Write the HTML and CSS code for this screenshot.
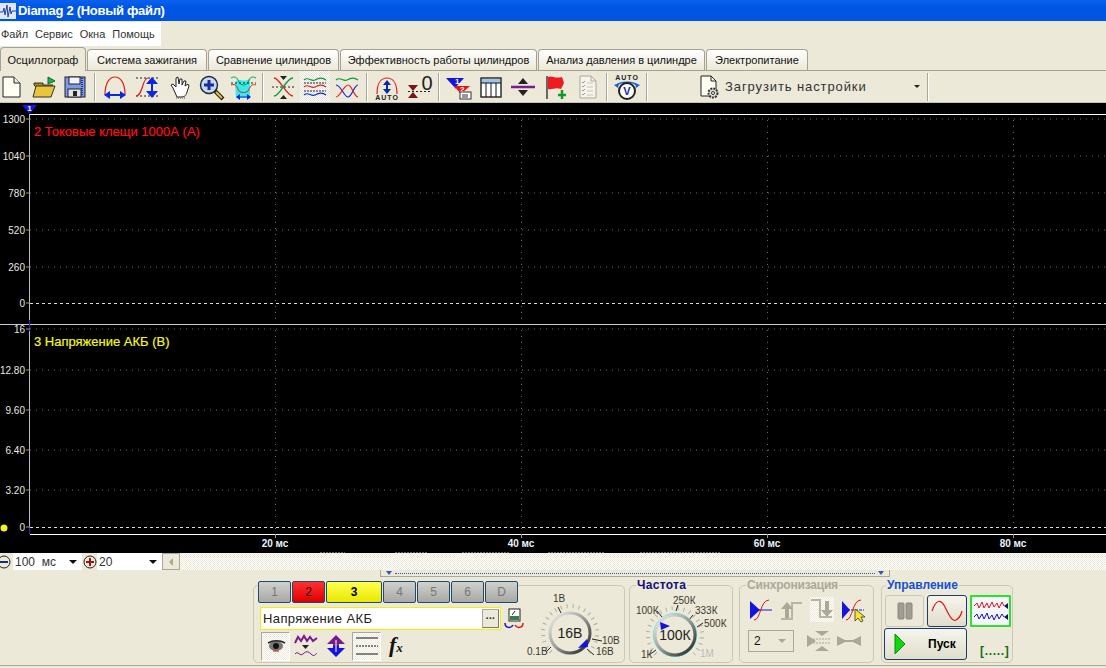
FILE: index.html
```html
<!DOCTYPE html>
<html>
<head>
    <title>Diamag 2</title>
    <link rel="stylesheet" href="styles.css">
</head>
<body>
<div class="app">
    <div class="titlebar">
        <svg class="app-icon" width="16" height="16" viewBox="0 0 16 16"><rect width="16" height="16" fill="#dfe8fb"/><path d="M0 9H3L4 5 5 12 7 2 8 14 10 4 11 11 12 8H16" fill="none" stroke="#2a3f9a" stroke-width="1"/></svg>
        <span>Diamag 2 (Новый файл)</span>
    </div>

    <div class="menubar">
        <div class="menu-items">
            <span>Файл</span><span>Сервис</span><span>Окна</span><span>Помощь</span>
        </div>
    </div>

    <div class="tabs">
        <div class="tab active">Осциллограф</div>
        <div class="tab">Система зажигания</div>
        <div class="tab">Сравнение цилиндров</div>
        <div class="tab">Эффективность работы цилиндров</div>
        <div class="tab">Анализ давления в цилиндре</div>
        <div class="tab">Электропитание</div>
    </div>

    <div class="toolbar">
        <div class="tool"><svg width="30" height="26"><path d="M7 3H18L24 9V23H7Z" fill="#fffff4" stroke="#222"/><path d="M18 3V9H24" fill="#eee" stroke="#222"/></svg></div>
        <div class="tool"><svg width="30" height="26"><path d="M6 11V9H15V11H25L22 13H8Z" fill="#a98a1c" stroke="#333"/><path d="M5 23L8 12H27L23 23Z" fill="#e8c53a" stroke="#333"/><path d="M20 10V3L27 7Z" fill="#22b14c" stroke="#0d6b2a"/></svg></div>
        <div class="tool"><svg width="30" height="26"><rect x="5" y="3" width="20" height="20" fill="#7d9be0" stroke="#223"/><rect x="9" y="3" width="11" height="7" fill="#f4f4f4" stroke="#223"/><rect x="8" y="15" width="13" height="8" fill="#e4e4e4" stroke="#223"/><rect x="13" y="17" width="4" height="5" fill="#222"/><path d="M22 4V22" stroke="#123c9c" stroke-dasharray="1 1" stroke-width="2"/></svg></div>
        <div class="sep"></div>
        <div class="tool"><svg width="30" height="26"><path d="M5 21C5 8 10 3 15 3S25 8 25 21" fill="none" stroke="#e02020" stroke-width="1.2"/><path d="M6 21H24" stroke="#0a28e0" stroke-width="2"/><path d="M4 21L10 17V25ZM26 21L20 17V25Z" fill="#0a28e0"/></svg></div>
        <div class="tool"><svg width="30" height="26"><path d="M4 4H26M4 22H26" stroke="#222" stroke-dasharray="2 2"/><path d="M4 22C11 22 10 4 16 4" fill="none" stroke="#e02020" stroke-width="1.2"/><path d="M20 7V19" stroke="#0a28e0" stroke-width="2"/><path d="M20 3L26 10H14ZM20 24L26 17H14Z" fill="#0a28e0"/></svg></div>
        <div class="tool"><svg width="30" height="26"><path d="M9 14L7 11 9 10 12 13V4L14 3 15 10 16 5H18L18 11 20 7H22L21 12 24 10 25 12 23 18C22 22 20 23 17 23H13Z" fill="#fff" stroke="#222"/><path d="M12 24H22" stroke="#555" stroke-dasharray="1 1"/></svg></div>
        <div class="tool"><svg width="30" height="26"><path d="M19 17L27 25" stroke="#222" stroke-width="4"/><path d="M20 18L26 24" stroke="#eec22a" stroke-width="2"/><circle cx="13" cy="11" r="8.5" fill="#c5d8f4" stroke="#223" stroke-width="1.4"/><path d="M8 11H18M13 6V16" stroke="#1a2a9c" stroke-width="3"/></svg></div>
        <div class="tool"><svg width="30" height="26"><path d="M7 8C12 3 14 9 22 5V24H8Z" fill="#38eaea"/><path d="M3 4C7 2 9 3 11 8 13 12 18 12 20 8 22 3 24 2 28 4" fill="none" stroke="#0a9a3a"/><path d="M3 11C8 9 9 13 11 17 13 19 18 19 20 17 22 13 24 9 28 11" fill="none" stroke="#e02020"/><path d="M3 9H28" stroke="#222" stroke-dasharray="2 2"/><path d="M10 23H21" stroke="#0a28e0"/><path d="M8 23L12 20V26ZM23 23L19 20V26Z" fill="#0a28e0"/></svg></div>
        <div class="sep"></div>
        <div class="tool"><svg width="30" height="26"><path d="M6 4C12 4 18 22 25 22" fill="none" stroke="#e02020" stroke-width="1.3"/><path d="M6 22C12 22 18 4 25 4" fill="none" stroke="#0a9a3a" stroke-width="1.3"/><path d="M4 13H27" stroke="#222" stroke-dasharray="2 2"/><path d="M12 2H19L15.500 6ZM12 25H19L15.500 21Z" fill="#222"/></svg></div>
        <div class="tool pressed"><svg width="30" height="26"><path d="M4 6C8 2 11 8 15 6S22 3 26 6" fill="none" stroke="#0a9a3a" stroke-width="1.2"/><path d="M4 13C8 9 11 15 15 13S22 10 26 13" fill="none" stroke="#e02020" stroke-width="1.2"/><path d="M4 21C8 17 11 23 15 21S22 18 26 21" fill="none" stroke="#0a28e0" stroke-width="1.2"/><path d="M4 9H26M4 17H26" stroke="#222" stroke-dasharray="2 1"/></svg></div>
        <div class="tool"><svg width="30" height="26"><path d="M4 6C8 2 11 8 15 6S22 3 26 6" fill="none" stroke="#0a9a3a" stroke-width="1.2"/><path d="M4 11C9 11 12 23 16 23S22 11 26 11" fill="none" stroke="#0a28e0" stroke-width="1.2"/><path d="M4 23C8 23 12 11 16 11S22 23 26 23" fill="none" stroke="#e02020" stroke-width="1.2"/></svg></div>
        <div class="sep"></div>
        <div class="tool"><svg width="30" height="26"><path d="M5 20C5 8 10 4 15 4S25 8 25 20" fill="none" stroke="#e02020" stroke-width="1.2"/><path d="M15 9V17" stroke="#0a28a0" stroke-width="2"/><path d="M15 6L19 11H11ZM15 20L19 15H11Z" fill="#0a28a0"/><text x="15" y="26" class="tiny" text-anchor="middle">AUTO</text></svg></div>
        <div class="tool"><svg width="30" height="26"><path d="M4 11H14L9 17ZM4 24H14L9 18Z" fill="#7a1414"/><path d="M4 17.500H28" stroke="#222" stroke-dasharray="2 2"/><text x="23" y="16" class="zero" text-anchor="middle">0</text></svg></div>
        <div class="sep"></div>
        <div class="tool"><svg width="30" height="26"><path d="M2 4H20L12 13V15Z" fill="#1414e0"/><path d="M10 12H26L18 19V23L16 24V19Z" fill="#e01414"/><text x="11" y="10" class="num">1</text><text x="16" y="18" class="num">2</text><rect x="16" y="18" width="11" height="7" fill="#fff" stroke="#333"/><path d="M19 20V24M21 20V24M23 20V24" stroke="#333"/></svg></div>
        <div class="tool"><svg width="30" height="26"><rect x="5" y="4" width="20" height="19" fill="#fff" stroke="#111" stroke-width="1.300"/><rect x="6" y="5" width="18" height="4" fill="#9fc4ea"/><path d="M5 9H25M10 9V23M15 9V23M20 9V23" stroke="#111"/></svg></div>
        <div class="tool"><svg width="30" height="26"><path d="M3 13H27" stroke="#7a1a8c" stroke-width="2.500"/><path d="M15 4L20 10H10ZM15 22L20 16H10Z" fill="#222"/></svg></div>
        <div class="tool"><svg width="30" height="26"><path d="M7 2V25" stroke="#222" stroke-width="1.300"/><path d="M8 3C12 1 14 5 22 3L24 9 21 15C15 13 13 16 8 15Z" fill="#ee1c1c"/><path d="M22 16V25M18 21H26" stroke="#109a2c" stroke-width="2.500"/></svg></div>
        <div class="tool"><svg width="30" height="26"><path d="M8 2H19L24 7V24H8Z" fill="#f6f4ea" stroke="#aaa89a"/><path d="M19 2V7H24" fill="none" stroke="#aaa89a"/><path d="M10 8L11 9 13 7M10 12L11 13 13 11M10 16L11 17 13 15M10 20L11 21 13 19" fill="none" stroke="#999"/><path d="M15 9H21M15 13H21M15 17H21M15 21H21" stroke="#c8c6b8"/></svg></div>
        <div class="sep"></div>
        <div class="tool"><svg width="30" height="26"><text x="15" y="6" class="tiny" text-anchor="middle">AUTO</text><path d="M4 12C8 7 22 7 26 12" fill="none" stroke="#1464e0" stroke-width="1.500"/><path d="M2 11L7 9 6 14ZM28 11L23 9 24 14Z" fill="#1464e0"/><circle cx="15" cy="17" r="8" fill="#fff" stroke="#222" stroke-width="2"/><text x="15" y="21" class="vee" text-anchor="middle">V</text></svg></div>
        <div class="sep"></div>

        <div class="load-btn">
            <svg width="24" height="26"><path d="M4 2H14L19 7V22H4Z" fill="#fffff4" stroke="#222"/><path d="M14 2V7H19" fill="none" stroke="#222"/><circle cx="16" cy="19" r="4.500" fill="#ddd" stroke="#333" stroke-dasharray="2 1" stroke-width="2"/><circle cx="16" cy="19" r="1.500" fill="#fff" stroke="#333"/></svg>
            <span class="load-label">Загрузить настройки</span>
            <span class="load-arrow"></span>
        </div>
        <div class="sep last"></div>
    </div>

    <div class="plot">
        <svg class="scope" width="1106" height="450">
            <g class="grid">
                <path d="M30 16H1106M30 53H1106M30 90H1106M30 127H1106M30 164H1106"/>
                <path d="M30 226H1106M30 267H1106M30 307H1106M30 347H1106M30 387H1106"/>
                <path d="M275.500 11V431M521.500 11V431M767.500 11V431M1013.500 11V431"/>
            </g>
            <path class="zero-line" d="M30 200.500H1106M30 424.500H1106"/>
            <path class="frame" d="M30 11.500H1106M30 431.500H1106"/>
            <path class="divider" d="M0 221.500H1106"/>
            <path class="axis" d="M29.500 11V431"/>
            <path class="axis-mark" d="M29.500 217V228M29.500 424V431"/>
            <path class="ticks" d="M26 16H30M26 53H30M26 90H30M26 127H30M26 164H30M26 200H30M26 226H30M26 267H30M26 307H30M26 347H30M26 387H30M26 424H30M275.500 431V435M521.500 431V435M767.500 431V435M1013.500 431V435"/>
            <path d="M22 2H37L29.500 11Z" fill="#1414f0"/>
            <text x="29.500" y="8" class="marker" text-anchor="middle">1</text>

            <text x="34" y="33" class="chan-red">2 Токовые клещи 1000А (А)</text>
            <text x="34" y="243" class="chan-yellow">3 Напряжение АКБ (В)</text>

            <g class="y-labels" text-anchor="end">
                <text x="25" y="20">1300</text><text x="25" y="57">1040</text><text x="25" y="94">780</text>
                <text x="25" y="131">520</text><text x="25" y="168">260</text><text x="25" y="204">0</text>
                <text x="25" y="230">16</text><text x="25" y="271">12.80</text><text x="25" y="311">9.60</text>
                <text x="25" y="351">6.40</text><text x="25" y="391">3.20</text><text x="25" y="428">0</text>
            </g>
            <g class="x-labels" text-anchor="middle">
                <text x="275" y="444">20 мс</text><text x="521" y="444">40 мс</text>
                <text x="767" y="444">60 мс</text><text x="1013" y="444">80 мс</text>
            </g>
            <circle cx="4" cy="425" r="3.500" fill="#f6f01e"/>
            <path class="clipped" d="M320 449.500H345M395 449.500H428M462 449.500H510M548 449.500H605M640 449.500H720"/>
        </svg>
    </div>

    <div class="scrollrow">
        <div class="round-btn first"><svg width="14" height="14"><circle cx="4" cy="7" r="6" fill="#ece9d8" stroke="#222"/><path d="M0 7H8" stroke="#1a2a7c" stroke-width="2"/></svg></div>
        <div class="combo wide"><span>100&nbsp; мс</span><i class="down"></i></div>
        <div class="round-btn"><svg width="14" height="14"><circle cx="7" cy="7" r="6" fill="#ece9d8" stroke="#222"/><path d="M3 7H11M7 3V11" stroke="#a01414" stroke-width="2"/></svg></div>
        <div class="combo narrow"><span>20</span><i class="down"></i></div>
        <div class="scroll-btn"><i></i></div>
        <div class="track"></div>
    </div>

    <div class="splitter"><i class="tri"></i><span class="dots"></span><i class="tri"></i></div>

    <div class="controls">
        <div class="panel channels">
            <div class="chan-col">
                <div class="chan-btns">
                    <div class="chan">1</div><div class="chan red">2</div><div class="chan yellow">3</div>
                    <div class="chan">4</div><div class="chan">5</div><div class="chan">6</div><div class="chan">D</div>
                </div>
                <div class="name-row">
                    <div class="name-box"><span>Напряжение АКБ</span><div class="more">...</div></div>
                    <svg width="20" height="22"><rect x="5" y="1" width="11" height="12" fill="#fff" stroke="#222"/><rect x="6" y="8" width="9" height="4" fill="#3a7a5a"/><path d="M8 7L11 3" stroke="#222"/><path d="M1 15C1 20 7 21 9 17" fill="none" stroke="#1414c0" stroke-width="1.500"/><path d="M19 15C19 20 13 21 11 17" fill="none" stroke="#e01414" stroke-width="1.500"/></svg>
                </div>
                <div class="icon-row">
                    <div class="small-tool pressed"><svg width="22" height="14"><ellipse cx="11" cy="7" rx="7" ry="5" fill="#777"/><circle cx="11" cy="7" r="3" fill="#111"/><path d="M3 4C8 1 15 1 20 4" fill="none" stroke="#222" stroke-width="1.500"/><path d="M8 12H14" stroke="#c22"/></svg></div>
                    <svg class="gap-a" width="24" height="24"><path d="M1 9L4 3 7 7 10 2 13 7 16 3 19 7 23 4" fill="none" stroke="#7a1a8c" stroke-width="2"/><path d="M8 11H15L11.500 15Z" fill="#222"/><path d="M1 20C4 16 6 23 9 20S14 17 17 20 21 21 23 19" fill="none" stroke="#7a1a8c"/></svg>
                    <svg class="gap-b" width="20" height="24"><path d="M10 1L19 10H13V12H7V10H1Z" fill="#7a1a8c"/><path d="M10 23L19 14H13V12H7V14H1Z" fill="#1414e0"/><path d="M10 6V18" stroke="#fff"/></svg>
                    <div class="small-tool pressed gap-c"><svg width="22" height="20"><path d="M0 2H22M0 18H22" stroke="#111"/><path d="M0 10H22" stroke="#111" stroke-dasharray="2 1"/></svg></div>
                    <span class="fx">f<small>x</small></span>
                </div>
            </div>
            <svg class="dial" width="100" height="78">
                <path class="dial-ticks" d="M26.900 67.100A27 27 0 1 1 65.100 67.100"/>
                <path class="dial-major" d="M34 22L37 28M22 67L27 62M70 70L63 64M78 56L68 54"/>
                <circle cx="46" cy="48" r="20" fill="#ece9d8" stroke="url(#ring)" stroke-width="3"/>
                <path d="M54 63L63 54 64 62Z" fill="#1414e0"/>
                <text x="29" y="17">1В</text><text x="3" y="70">0.1В</text><text x="72" y="70">16В</text><text x="78" y="59">10В</text>
                <text x="46" y="53" class="dial-value" text-anchor="middle">16В</text>
            </svg>
        </div>

        <div class="panel freq">
            <div class="panel-title navy">Частота</div>
            <svg class="dial" width="104" height="78">
                <defs>
                    <linearGradient id="ring" x1="0" y1="0" x2="1" y2="1"><stop offset="0" stop-color="#f4f4f0"/><stop offset="0.5" stop-color="#999"/><stop offset="1" stop-color="#1c1c1c"/></linearGradient>
                </defs>
                <path class="dial-ticks" d="M26.900 69.100A27 27 0 1 1 65.100 69.100"/>
                <path class="dial-major" d="M28 26L33 32M49 20L47 26M64 30L60 35M74 38L68 42M20 70L27 65"/>
                <circle cx="46" cy="50" r="21.500" fill="none" stroke="#28e8f0"/>
                <circle cx="46" cy="50" r="20" fill="#ece9d8" stroke="url(#ring)" stroke-width="3"/>
                <path d="M31 37L41 41 32 45Z" fill="#1414e0"/>
                <text x="7" y="29">100К</text><text x="44" y="19">250К</text><text x="66" y="29">333К</text><text x="75" y="42">500К</text><text x="12" y="73">1К</text><text x="71" y="72" class="off">1М</text>
                <text x="46" y="55" class="dial-value" text-anchor="middle">100К</text>
            </svg>
        </div>

        <div class="panel sync">
            <div class="panel-title grey">Синхронизация</div>
            <div class="sync-row">
                <svg width="22" height="24"><path d="M0 3V21L10 12Z" fill="#1414e0"/><path d="M1 12H22" stroke="#1414e0"/><path d="M4 22C11 22 10 2 19 2" fill="none" stroke="#e01414"/></svg>
                <svg width="22" height="24"><path d="M1 21H12V5H22" fill="none" stroke="#b8b5a5" stroke-width="2"/><path d="M5 20V11H1L7 4 13 11H9V20Z" fill="#aca899"/></svg>
                <div class="hatch-tool"><svg width="22" height="24"><path d="M1 3H10V20H22" fill="none" stroke="#b8b5a5" stroke-width="2"/><path d="M15 4V13H11L17 20 23 13H19V4Z" fill="#aca899"/></svg></div>
                <svg width="24" height="24"><path d="M0 3V21L8 12Z" fill="#1414e0"/><path d="M1 12H22" stroke="#1414e0" stroke-dasharray="3 1"/><path d="M4 22C11 22 10 2 19 2" fill="none" stroke="#e01414"/><path d="M13 11L13 23 16 20 19 24 21 23 19 19 23 19Z" fill="#f8e81c" stroke="#222" stroke-width="0.700"/></svg>
            </div>
            <div class="sync-row second">
                <div class="combo-off"><span>2</span><i></i></div>
                <svg width="24" height="22"><path d="M0 5L9 11 0 17ZM8 1H22L15 6ZM8 21H22L15 16Z" fill="#aca899"/><path d="M0 9H24M0 13H24" stroke="#aca899" stroke-dasharray="2 1"/></svg>
                <svg width="24" height="22"><path d="M0 6L10 11 0 16ZM24 6L14 11 24 16Z" fill="#aca899"/><path d="M0 11H24" stroke="#aca899" stroke-width="2"/></svg>
            </div>
        </div>

        <div class="panel control">
            <div class="panel-title blue">Управление</div>
            <div class="ctl-grid">
                <div class="ctl flat"><svg width="16" height="18"><rect x="1" y="1" width="6" height="16" rx="1" fill="#a09e92" stroke="#8a887c"/><rect x="9" y="1" width="6" height="16" rx="1" fill="#a09e92" stroke="#8a887c"/></svg></div>
                <div class="ctl navy-border"><svg width="32" height="22"><path d="M1 11C5 -1 10 -1 14 7S21 22 25 20 30 15 31 11" fill="none" stroke="#e01414" stroke-width="1.200"/></svg></div>
                <div class="ctl green-border"><svg width="36" height="24"><path d="M1 7L4 4 6 9 9 3 11 9 14 4 16 9 19 3 21 8 24 4 26 9 29 3 31 7" fill="none" stroke="#e01414"/><path d="M1 18L4 15 6 20 9 15 11 20 14 14 16 20 19 16 21 21 24 15 26 20 29 15 31 18" fill="none" stroke="#1414c0"/><path d="M35 4V10L31 7ZM35 15V21L31 18Z" fill="#14145c"/></svg></div>
                <div class="ctl navy-border start">
                    <svg width="12" height="22"><path d="M1 1L11 11 1 21Z" fill="#10d810" stroke="#0a8a0a"/></svg>
                    <span>Пуск</span>
                </div>
                <div class="status">[.....]</div>
            </div>
        </div>
    </div>
    <div class="bottom-edge"></div>
</div>
</body>
</html>
```
FILE: styles.css
```css
* {
    box-sizing: border-box;
}
html, body {
    margin: 0;
    height: 668px;
    overflow: hidden;
}
body {
    background: #ece9d8;
    color: #111;
    font-family: "Liberation Sans", Arial, sans-serif;
    font-size: 11px;
}
svg {
    display: block;
    flex-shrink: 0;
    overflow: visible;
}
.app {
    display: flex;
    flex-direction: column;
    height: 668px;
}

/* title and menu */
.titlebar {
    display: flex;
    align-items: center;
    gap: 2px;
    height: 21px;
    background: linear-gradient(#0a62ee, #0056e4 30%, #0054e0);
    color: #fff;
    font-size: 13px;
    font-weight: bold;
    letter-spacing: -0.3px;
}
.menubar {
    height: 25px;
    padding-top: 1px;
}
.menu-items {
    display: flex;
    gap: 7px;
    width: 161px;
    height: 24px;
    padding-left: 1px;
    align-items: center;
    background: #fff;
    color: #333;
}

/* tabs */
.tabs {
    display: grid;
    grid-template-columns: 87px 121px 132px 198px 168px 103px;
    align-items: end;
    height: 25px;
    padding-top: 1px;
    border-bottom: 1px solid #a5a294;
}
.tab {
    display: flex;
    align-items: center;
    justify-content: center;
    height: 21px;
    margin-right: 1px;
    border: 1px solid #a5a294;
    border-bottom: none;
    border-radius: 4px 4px 0 0;
    background: linear-gradient(#fff, #f3f1e6 60%, #ece9d8);
}
.tab.active {
    height: 24px;
    margin-bottom: -1px;
    background: #ece9d8;
    position: relative;
    z-index: 1;
}

/* main toolbar */
.toolbar {
    display: flex;
    align-items: center;
    height: 32px;
    border-bottom: 1px solid #c8c5b4;
}
.tool {
    display: flex;
    align-items: center;
    justify-content: center;
    width: 22px;
    height: 31px;
    margin-right: 10px;
}
.tool:has(+ .sep) {
    margin-right: 0;
}
.tool.pressed {
    width: 30px;
    margin-left: -4px;
    margin-right: 6px;
    background: repeating-conic-gradient(#e4e2d4 0 25%, #fff 0 50%) 0 0 / 2px 2px;
}
.sep {
    width: 2px;
    height: 28px;
    margin: 0 8px;
    border-left: 1px solid #aca899;
    border-right: 1px solid #fff;
}
.sep.last {
    margin: 0;
}
.tiny {
    font-size: 7px;
    font-weight: bold;
    letter-spacing: 1px;
    fill: #222;
}
.zero {
    font-size: 20px;
    fill: #222;
}
.num {
    font-size: 8px;
    font-weight: bold;
    fill: #fff;
}
.vee {
    font-size: 11px;
    font-weight: bold;
    fill: #1a2a9c;
}
.load-btn {
    display: flex;
    align-items: center;
    width: 231px;
    margin-left: 40px;
    padding-left: 1px;
}
.load-label {
    margin-left: 4px;
    font-size: 13px;
    letter-spacing: 0.9px;
    color: #333;
}
.load-arrow {
    margin-left: auto;
    margin-right: 7px;
    border: 3px solid transparent;
    border-top: 3px solid #222;
    border-bottom: none;
}

/* oscilloscope */
.plot {
    height: 450px;
    background: #000;
}
.grid path {
    fill: none;
    stroke: #6a6a6a;
    stroke-dasharray: 1 5;
}
.zero-line {
    stroke: #ddd;
    stroke-dasharray: 3 3;
}
.frame {
    stroke: #fff;
}
.divider {
    stroke: #ccc;
}
.axis {
    stroke: #bbb;
}
.axis-mark {
    stroke: #2020e0;
}
.ticks {
    stroke: #999;
}
.clipped {
    stroke: #666;
    stroke-dasharray: 2 1;
}
.marker {
    font-size: 8px;
    font-weight: bold;
    fill: #fff;
}
.chan-red {
    font-size: 13px;
    fill: #ff1010;
    stroke: #ff1010;
    stroke-width: 0.2px;
}
.chan-yellow {
    font-size: 13px;
    fill: #f6f61a;
    stroke: #f6f61a;
    stroke-width: 0.2px;
}
.y-labels text {
    font-size: 10px;
    fill: #e8e8e0;
}
.x-labels text {
    font-size: 10px;
    font-weight: bold;
    fill: #e8f4ff;
}

/* time scale row */
.scrollrow {
    display: flex;
    height: 17px;
}
.round-btn {
    display: flex;
    align-items: center;
    justify-content: center;
    width: 15px;
    background: #ece9d8;
}
.round-btn.first {
    width: 13px;
    justify-content: flex-start;
}
.combo {
    display: flex;
    align-items: center;
    justify-content: space-between;
    padding: 0 5px 0 2px;
    background: #fff;
    font-size: 12px;
    color: #333;
}
.combo.wide {
    width: 69px;
}
.combo.narrow {
    width: 65px;
}
.down {
    border: 4px solid transparent;
    border-top: 4px solid #111;
    border-bottom: none;
}
.scroll-btn {
    display: flex;
    align-items: center;
    justify-content: center;
    width: 18px;
    border: 1px solid #aca899;
    background: #ece9d8;
}
.scroll-btn i {
    border: 4px solid transparent;
    border-right: 4px solid #aca899;
    border-left: none;
}
.track {
    flex: 1;
    background: repeating-conic-gradient(#ece9d8 0 25%, #fff 0 50%) 0 0 / 2px 2px;
}

/* splitter */
.splitter {
    display: flex;
    align-items: center;
    gap: 3px;
    width: 510px;
    height: 7px;
    margin-left: 380px;
    padding: 0 5px;
    border: 1px solid #aca899;
    border-top: none;
}
.tri {
    border: 3px solid transparent;
    border-top: 4px solid #2a58c8;
    border-bottom: none;
}
.dots {
    flex: 1;
    border-top: 1px dotted #2a58c8;
}

/* bottom controls */
.controls {
    display: flex;
    height: 78px;
    margin-top: 8px;
    margin-left: 253px;
}
.panel {
    position: relative;
    height: 78px;
    border: 1px solid #cbc8b7;
    border-radius: 5px;
}
.panel-title {
    position: absolute;
    top: -7px;
    left: 6px;
    padding: 0 1px;
    background: #ece9d8;
    font-size: 12px;
    font-weight: bold;
    line-height: 13px;
}
.navy {
    letter-spacing: 0.3px;
    color: #10107c;
}
.grey {
    letter-spacing: -0.2px;
    color: #aca899;
}
.blue {
    left: 4px;
    color: #1450d0;
}

.channels {
    display: flex;
    width: 372px;
    margin-right: 4px;
}
.chan-col {
    width: 272px;
    padding-left: 4px;
}
.chan-btns {
    display: flex;
    gap: 1px;
    margin-top: -5px;
}
.chan {
    display: flex;
    align-items: center;
    justify-content: center;
    width: 33px;
    height: 22px;
    border: 1px solid #1c4a70;
    border-radius: 2px;
    background: linear-gradient(#d0d0cc, #a8a8a4);
    color: #777;
    font-size: 12px;
}
.chan.red {
    background: linear-gradient(#ff3030, #e00000);
    color: #111;
}
.chan.yellow {
    width: 56px;
    background: linear-gradient(#ffff50, #e8e800);
    color: #000;
    font-weight: bold;
}
.name-row {
    display: flex;
    align-items: center;
    gap: 3px;
    margin: 4px 0 0 2px;
}
.name-box {
    display: flex;
    align-items: center;
    justify-content: space-between;
    width: 241px;
    height: 23px;
    padding: 0 1px 0 2px;
    border: 1px solid #f4f000;
    background: #fff;
    font-size: 13px;
    letter-spacing: 0.4px;
    color: #222;
}
.more {
    width: 17px;
    height: 19px;
    border: 1px solid #aca899;
    border-right-color: #777;
    border-bottom-color: #777;
    background: #ece9d8;
    font-size: 10px;
    font-weight: bold;
    line-height: 12px;
    text-align: center;
}
.icon-row {
    display: flex;
    align-items: center;
    height: 30px;
    margin: 1px 0 0 3px;
}
.small-tool {
    display: flex;
    align-items: center;
    justify-content: center;
    width: 29px;
    height: 29px;
}
.small-tool.pressed {
    border: 1px solid #fff;
    border-top-color: #aca899;
    border-left-color: #aca899;
    background: repeating-conic-gradient(#ece9d8 0 25%, #fff 0 50%) 0 0 / 2px 2px;
}
.gap-a {
    margin-left: 4px;
}
.gap-b {
    margin-left: 8px;
}
.gap-c {
    margin-left: 6px;
}
.fx {
    margin-left: 8px;
    font-family: "Liberation Serif", serif;
    font-size: 22px;
    font-style: italic;
    font-weight: bold;
    line-height: 20px;
}
.fx small {
    font-size: 13px;
}

.dial {
    margin: -1px 0 0 -1px;
}
.dial text {
    font-size: 10px;
    fill: #3a3a30;
}
.dial .dial-value {
    font-size: 14px;
    fill: #222;
}
.dial .off {
    fill: #bbb;
}
.dial-ticks {
    fill: none;
    stroke: #b0ad9e;
    stroke-width: 4;
    stroke-dasharray: 1 5;
}
.dial-major {
    stroke: #222;
}

.freq {
    width: 104px;
    margin-right: 6px;
}
.sync {
    width: 135px;
    margin-right: 7px;
    padding: 11px 0 0 10px;
}
.sync-row {
    display: flex;
    align-items: center;
    gap: 8px;
    height: 25px;
}
.sync-row.second {
    gap: 6px;
    margin-top: 8px;
    margin-left: -2px;
    height: 22px;
}
.hatch-tool {
    width: 24px;
    height: 25px;
    background: repeating-conic-gradient(#ece9d8 0 25%, #fff 0 50%) 0 0 / 2px 2px;
}
.combo-off {
    display: flex;
    align-items: center;
    justify-content: space-between;
    width: 46px;
    height: 22px;
    margin-right: 7px;
    padding: 0 7px 0 5px;
    border: 1px solid #aca899;
    font-size: 12px;
}
.combo-off i {
    border: 4px solid transparent;
    border-top: 4px solid #aca899;
    border-bottom: none;
}

.control {
    width: 132px;
}
.ctl-grid {
    display: grid;
    grid-template-columns: 39px 40px 41px;
    grid-template-rows: 32px 32px;
    gap: 1px 3px;
    padding: 9px 0 0 3px;
}
.ctl {
    display: flex;
    align-items: center;
    justify-content: center;
    border-radius: 3px;
    background: linear-gradient(#f6f5ee, #e0ddca);
}
.flat {
    border: 1px solid #cbc8b7;
    background: #ece9d8;
}
.navy-border {
    border: 1px solid #1c3c6c;
}
.green-border {
    border: 2px solid #30e030;
    border-radius: 1px;
    background: #f4f6fc;
}
.start {
    grid-column: span 2;
    justify-content: flex-start;
    gap: 22px;
    margin-left: -1px;
    padding-left: 9px;
    font-size: 12px;
    font-weight: bold;
    color: #000;
}
.status {
    align-self: end;
    padding: 0 0 2px 10px;
    color: #107010;
    font-size: 12px;
    font-weight: bold;
    letter-spacing: 0.7px;
    white-space: nowrap;
}
.bottom-edge {
    height: 3px;
    margin-top: 2px;
    border-top: 1px solid #aca899;
}
```
